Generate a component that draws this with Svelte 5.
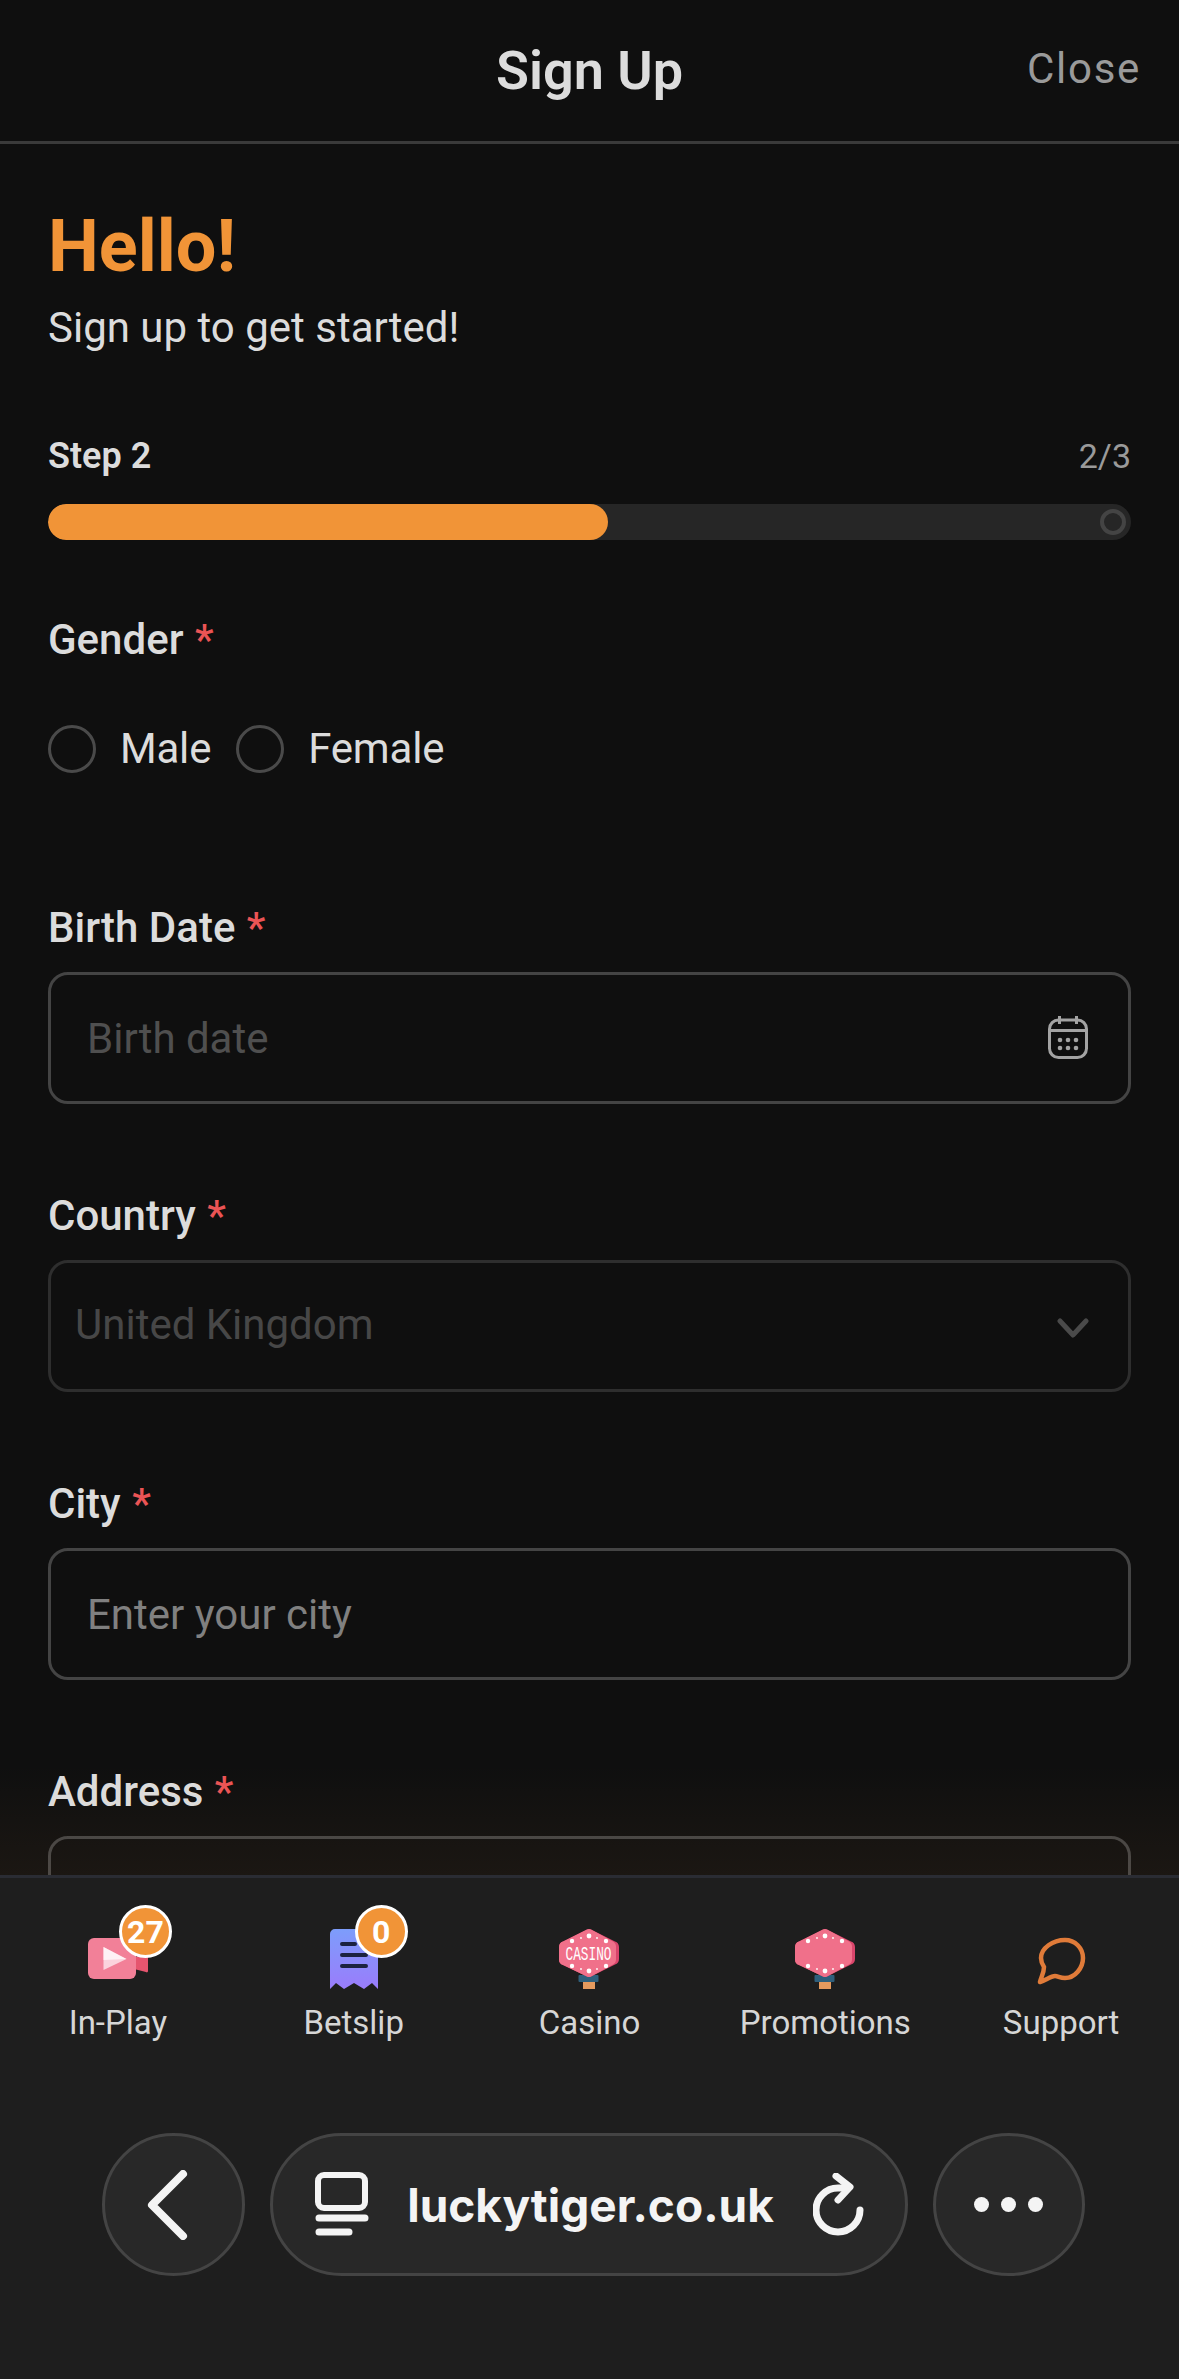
<script>
  let gender = $state("");
  let city = $state("");

  const tabs = [
    { name: "In-Play", icon: "play", badge: "27" },
    { name: "Betslip", icon: "slip", badge: "0" },
    { name: "Casino", icon: "casino" },
    { name: "Promotions", icon: "promo" },
    { name: "Support", icon: "chat" }
  ];

  const lights = [
    [30, 7, 2.4], [13, 12, 2.2], [47, 12, 2.2], [22, 9, 0.9], [38, 9, 0.9],
    [30, 42, 2.4], [13, 37, 2.2], [47, 37, 2.2], [22, 40, 0.9], [38, 40, 0.9]
  ];
</script>

<div class="page">
  <header class="top">
    <h2>Sign Up</h2>
    <button class="close">Close</button>
  </header>

  <main class="scroll">
    <h1>Hello!</h1>
    <p class="sub">Sign up to get started!</p>

    <div class="step">
      <strong>Step 2</strong>
      <span>2/3</span>
    </div>
    <div class="bar">
      <div class="fill" style="width: 51.7%"></div>
      <i class="end"></i>
    </div>

    <div class="label gender-label">Gender <em>*</em></div>
    <div class="radios">
      <label><input type="radio" name="gender" value="m" bind:group={gender} />Male</label>
      <label><input type="radio" name="gender" value="f" bind:group={gender} />Female</label>
    </div>

    <div class="field">
      <div class="label">Birth Date <em>*</em></div>
      <div class="box">
        <input placeholder="Birth date" class="dim" />
        <svg class="cal" width="40" height="44" viewBox="0 0 40 44" fill="none" stroke="#a3a3a3" stroke-width="3">
          <rect x="1.5" y="5" width="37" height="37.5" rx="9" />
          <path d="M2 15.5h36M11.5 1v8M28.500 1v8" />
          <g fill="#a3a3a3" stroke="none">
            <circle cx="12" cy="25" r="2.300" /><circle cx="20" cy="25" r="2.300" /><circle cx="28" cy="25" r="2.300" />
            <circle cx="12" cy="33" r="2.300" /><circle cx="20" cy="33" r="2.300" /><circle cx="28" cy="33" r="2.300" />
          </g>
        </svg>
      </div>
    </div>

    <div class="field">
      <div class="label">Country <em>*</em></div>
      <div class="box off">
        <span class="value">United Kingdom</span>
        <svg class="chev" width="32" height="20" viewBox="0 0 32 20" fill="none" stroke="#4a4a4a" stroke-width="5" stroke-linecap="round" stroke-linejoin="round">
          <path d="M3 3l13 14L29 3" />
        </svg>
      </div>
    </div>

    <div class="field">
      <div class="label">City <em>*</em></div>
      <div class="box">
        <input placeholder="Enter your city" bind:value={city} />
      </div>
    </div>

    <div class="field">
      <div class="label">Address <em>*</em></div>
      <div class="box"><input /></div>
    </div>

    <div class="glow"></div>
  </main>

  <nav class="tabs">
    {#each tabs as tab}
      <a class="tab" href="#top">
        <span class="ico">
          {#if tab.icon === "play"}
            <svg width="60" height="42" viewBox="0 0 60 42" style="margin-top: 9px">
              <path d="M46 20l14-7v20c0 1-1 2-2 1l-12-3z" fill="#e5556f" />
              <rect x="0" y="0" width="48" height="41" rx="6" fill="#f28098" />
              <path d="M15.500 9L38.500 21 15.500 32z" fill="#fbd3dd" />
              <path d="M15.500 9L38.500 21 15.500 22z" fill="#fff" opacity=".7" />
            </svg>
          {:else if tab.icon === "slip"}
            <svg width="48" height="60" viewBox="0 0 48 60">
              <defs>
                <linearGradient id="slipfill" x1="0" y1="0" x2="0" y2="1">
                  <stop offset="0" stop-color="#7d9dfb" />
                  <stop offset="1" stop-color="#9a7cfb" />
                </linearGradient>
              </defs>
              <path d="M0 5a5 5 0 0 1 5-5h38a5 5 0 0 1 5 5v55l-6-6-8 6-10-6-10 6-8-6-6 6z" fill="url(#slipfill)" />
              <path d="M12 15h13M12 26h24M12 37h24" stroke="#1c2340" stroke-width="4" stroke-linecap="round" />
            </svg>
          {:else if tab.icon === "casino" || tab.icon === "promo"}
            <svg width="60" height="60" viewBox="0 0 60 60">
              <rect x="24" y="52" width="12" height="8" fill="#e49a5e" />
              <rect x="19.500" y="46" width="20" height="7" rx="1" fill="#2f5f7c" />
              <path d="M28 .6a4 4 0 0 1 4 0l24 11.800a6 6 0 0 1 4 5.600v12a6 6 0 0 1-4 5.600L32 47.400a4 4 0 0 1-4 0L4 36a6 6 0 0 1-4-5.600V18a6 6 0 0 1 4-5.600z" fill="#d9456b" />
              <path d="M28 .6a4 4 0 0 1 4 0l22 11.800a6 6 0 0 1 3 5.600v12a6 6 0 0 1-3 5.600L32 47.400a4 4 0 0 1-4 0L4 36a6 6 0 0 1-4-5.600V18a6 6 0 0 1 4-5.600z" fill="#f0708a" />
              {#each lights as [x, y, r]}
                <circle cx={x} cy={y} {r} fill="#fff" />
              {/each}
              {#if tab.icon === "casino"}
                <text x="6.500" y="31" class="neon" textLength="46" lengthAdjust="spacingAndGlyphs">CASINO</text>
              {/if}
            </svg>
          {:else}
            <svg width="50" height="48" viewBox="0 0 50 48" fill="none" stroke="#e07b39" stroke-width="4.500" stroke-linejoin="round" style="margin-top: 8px">
              <path d="M29 3c10 0 18 8 18 18s-8 20-18 20c-5 0-7-2-10-2-4 0-9 4-15 6 1-5 4-9 4-15-2-3-3-6-3-9C5 11 17 3 29 3z" />
            </svg>
          {/if}
          {#if tab.badge}
            <b class="badge">{tab.badge}</b>
          {/if}
        </span>
        <span class="tab-name">{tab.name}</span>
      </a>
    {/each}
  </nav>

  <footer class="browser">
    <button class="round back" aria-label="Back">
      <svg width="42" height="70" viewBox="0 0 42 70" fill="none" stroke="#f4f4f4" stroke-width="8" stroke-linecap="round" stroke-linejoin="round">
        <path d="M36 4L5 35l31 31" />
      </svg>
    </button>
    <div class="url">
      <svg width="54" height="66" viewBox="0 0 54 66" fill="none" stroke="#f4f4f4" stroke-linecap="round">
        <rect x="3" y="3" width="47" height="33" rx="6" stroke-width="6" />
        <path d="M4 46h46M4 60h30" stroke-width="7" />
      </svg>
      <span>luckytiger.co.uk</span>
      <svg width="52" height="64" viewBox="0 0 52 64" fill="none" stroke="#f4f4f4" stroke-width="7" stroke-linecap="round" stroke-linejoin="round">
        <path d="M47 37a22 22 0 1 1-22-22h8" />
        <path d="M23 3l14 11-12 13" />
      </svg>
    </div>
    <button class="round more" aria-label="More">
      <i></i><i></i><i></i>
    </button>
  </footer>
</div>

<style>
  :global(body) {
    margin: 0;
    background: #0f0f0f;
    font-family: Roboto, "Liberation Sans", sans-serif;
  }

  .page {
    width: 1179px;
    height: 2379px;
    display: flex;
    flex-direction: column;
    overflow: hidden;
    background: #0f0f0f;
  }

  /* cabecera */
  .top {
    flex: none;
    height: 141px;
    border-bottom: 3px solid #3a3a3a;
    display: flex;
    align-items: center;
    justify-content: center;
    position: relative;
  }

  .top h2 {
    margin: 0;
    font-size: 54px;
    font-weight: 600;
    color: #dcdcdc;
  }

  .close {
    position: absolute;
    right: 38px;
    top: 44px;
    background: none;
    border: none;
    padding: 0;
    font: 400 42px Roboto, sans-serif;
    letter-spacing: 1.7px;
    color: #9a9a9a;
  }

  /* formulario */
  .scroll {
    flex: 1;
    min-height: 0;
    overflow: hidden;
    position: relative;
    padding: 61px 48px 0;
  }

  h1 {
    margin: 0;
    font-size: 72px;
    line-height: 84px;
    font-weight: 700;
    color: #f19437;
  }

  .sub {
    margin: 11px 0 0;
    font-size: 42px;
    line-height: 56px;
    color: #dcdcdc;
  }

  .step {
    margin-top: 78px;
    display: flex;
    justify-content: space-between;
    align-items: center;
    height: 44px;
    font-size: 36px;
    color: #dcdcdc;
  }

  .step strong {
    font-weight: 600;
  }

  .step span {
    font-size: 34px;
    color: #9a9a9a;
  }

  .bar {
    margin-top: 26px;
    height: 36px;
    border-radius: 18px;
    background: #262626;
    position: relative;
    overflow: hidden;
  }

  .fill {
    height: 100%;
    border-radius: 18px;
    background: #f19437;
  }

  .end {
    position: absolute;
    right: 5px;
    top: 5px;
    width: 26px;
    height: 26px;
    box-sizing: border-box;
    border: 4px solid #444;
    border-radius: 50%;
  }

  .label {
    font-size: 42px;
    line-height: 50px;
    font-weight: 500;
    color: #dcdcdc;
  }

  .label em {
    font-style: normal;
    color: #ea5455;
    margin-left: 1px;
  }

  .gender-label {
    margin-top: 75px;
  }

  .radios {
    margin-top: 60px;
    display: flex;
    gap: 25px;
  }

  .radios label {
    display: flex;
    align-items: center;
    gap: 24px;
    font-size: 42px;
    letter-spacing: -0.2px;
    line-height: 48px;
    color: #dcdcdc;
  }

  .radios input {
    appearance: none;
    margin: 0;
    width: 48px;
    height: 48px;
    border: 3px solid #4a4a4a;
    border-radius: 50%;
  }

  .field {
    margin-top: 87px;
  }

  .radios + .field {
    margin-top: 130px;
  }

  .box {
    margin-top: 19px;
    height: 132px;
    box-sizing: border-box;
    border: 3px solid #444;
    border-radius: 20px;
    display: flex;
    align-items: center;
    justify-content: space-between;
    padding: 0 40px 0 36px;
  }

  .box input {
    flex: 1;
    min-width: 0;
    background: none;
    border: none;
    outline: none;
    padding: 0;
    font: 400 42px Roboto, sans-serif;
    color: #dcdcdc;
  }

  .box input::placeholder {
    color: #808080;
    opacity: 1;
  }

  .box input.dim::placeholder {
    color: #4f4f4f;
  }

  .cal {
    margin-bottom: 3px;
  }

  .box.off {
    border-color: #2e2e2e;
    padding: 0 39px 0 24px;
  }

  .value {
    font-size: 42px;
    color: #474747;
    margin-bottom: 3px;
  }

  .chev {
    margin-top: 4px;
  }

  .glow {
    position: absolute;
    left: 0;
    right: 0;
    bottom: 0;
    height: 110px;
    background: linear-gradient(to bottom, rgba(255, 170, 90, 0), rgba(255, 170, 90, 0.05));
    pointer-events: none;
  }

  /* barra inferior */
  .tabs {
    flex: none;
    height: 225px;
    box-sizing: border-box;
    border-top: 3px solid #2a2c33;
    background: #1e1e1e;
    display: grid;
    grid-template-columns: repeat(5, 1fr);
  }

  .tab {
    display: flex;
    flex-direction: column;
    align-items: center;
    padding-top: 51px;
    text-decoration: none;
  }

  .ico {
    position: relative;
    height: 60px;
    width: 60px;
    display: flex;
    justify-content: center;
    align-items: flex-start;
  }

  .tab-name {
    margin-top: 14px;
    font-size: 33px;
    line-height: 40px;
    color: #d6d6d6;
  }

  .badge {
    position: absolute;
    left: 31px;
    top: -24px;
    width: 53px;
    height: 53px;
    box-sizing: border-box;
    border: 3px solid #fff;
    border-radius: 50%;
    background: #f19437;
    color: #fff;
    font-size: 32px;
    font-weight: 700;
    display: flex;
    align-items: center;
    justify-content: center;
  }

  .neon {
    font: 400 20px "Liberation Mono", monospace;
    fill: #fff;
  }

  .browser {
    flex: none;
    height: 279px;
    background: #1e1e1e;
    display: flex;
    justify-content: center;
    align-items: flex-start;
    gap: 25px;
    padding: 33px 0 0 7px;
    box-sizing: border-box;
  }

  .round,
  .url {
    height: 143px;
    box-sizing: border-box;
    border: 3px solid #444;
    background: #282828;
  }

  .round {
    border-radius: 50%;
    padding: 0;
    display: flex;
    align-items: center;
    justify-content: center;
  }

  .back {
    width: 143px;
    padding-right: 11px;
  }

  .more {
    width: 152px;
    gap: 12px;
  }

  .more i {
    width: 15px;
    height: 15px;
    border-radius: 50%;
    background: #f4f4f4;
  }

  .url {
    width: 638px;
    border-radius: 72px;
    display: flex;
    align-items: center;
    padding: 0 40px 0 42px;
    justify-content: space-between;
    color: #f4f4f4;
  }

  .url span {
    font: 700 46px Inter, sans-serif;
  }
</style>
